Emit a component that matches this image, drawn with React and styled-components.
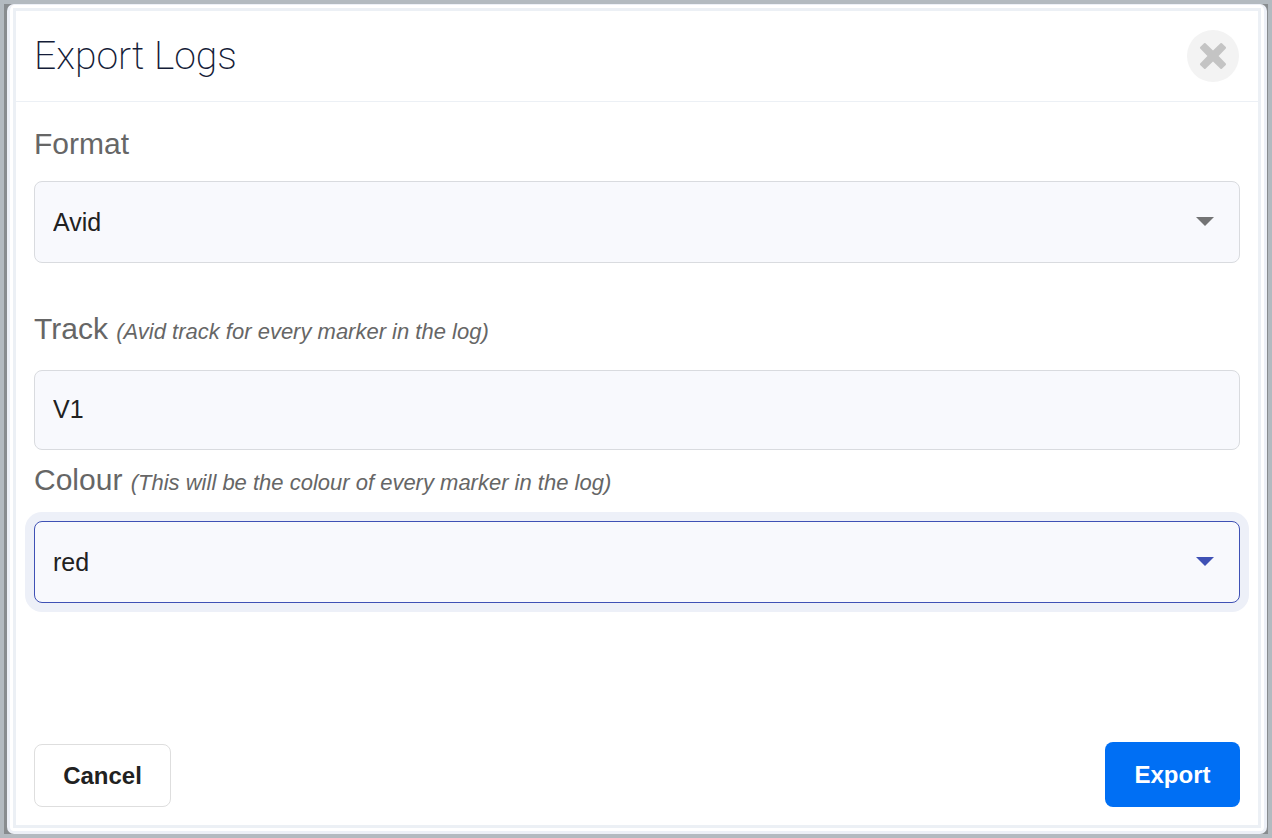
import { useState } from "react";
import styled, { createGlobalStyle } from "styled-components";

export default function App() {
  const [format, setFormat] = useState("Avid");
  const [track, setTrack] = useState("V1");
  const [colour, setColour] = useState("red");

  return (
    <>
      <GlobalStyle />
      <Page>
        <Shade>
          <Modal role="dialog" aria-labelledby="title">
            <Panel onSubmit={(e) => e.preventDefault()}>
              <Header>
                <Title id="title">Export Logs</Title>
                <CloseButton type="button" aria-label="Close">
                  <svg width="28" height="28" viewBox="0 0 28 28" aria-hidden="true">
                    <path
                      fill="#c4c4c4"
                      d="M5.1 1.2q.7-.6 1.4 0L14 8.4l7.5-7.2q.7-.6 1.4 0l3.9 3.9q.6.7 0 1.4L19.6 14l7.2 7.5q.6.7 0 1.4l-3.9 3.9q-.7.6-1.4 0L14 19.6l-7.5 7.2q-.7.6-1.4 0l-3.9-3.9q-.6-.7 0-1.4L8.4 14 1.2 6.5q-.6-.7 0-1.4z"
                    />
                  </svg>
                </CloseButton>
              </Header>
              <Fields>
                <Label htmlFor="format">Format</Label>
                <SelectBox>
                  <Select
                    id="format"
                    value={format}
                    onChange={(e) => setFormat(e.target.value)}
                  >
                    <option>Avid</option>
                    <option>CSV</option>
                  </Select>
                  <Arrow />
                </SelectBox>
                <Label htmlFor="track" $space="46px">
                  Track <Hint>(Avid track for every marker in the log)</Hint>
                </Label>
                <Input
                  id="track"
                  type="text"
                  value={track}
                  onChange={(e) => setTrack(e.target.value)}
                />
                <Label htmlFor="colour" $space="10px">
                  Colour{" "}
                  <Hint>(This will be the colour of every marker in the log)</Hint>
                </Label>
                <SelectBox $active>
                  <Select
                    id="colour"
                    value={colour}
                    onChange={(e) => setColour(e.target.value)}
                  >
                    <option>red</option>
                    <option>green</option>
                    <option>blue</option>
                  </Select>
                  <Arrow />
                </SelectBox>
              </Fields>
              <Footer>
                <CancelButton type="button">Cancel</CancelButton>
                <ExportButton type="submit">Export</ExportButton>
              </Footer>
            </Panel>
          </Modal>
        </Shade>
      </Page>
    </>
  );
}

function Arrow() {
  return (
    <ArrowIcon width="18" height="9" viewBox="0 0 18 9" aria-hidden="true">
      <path fill="currentColor" d="M0 0h18L9 9z" />
    </ArrowIcon>
  );
}

const GlobalStyle = createGlobalStyle`
  * {
    box-sizing: border-box;
  }

  body {
    margin: 0;
    font-family: "Liberation Sans", Arial, sans-serif;
    background-color: #b3bac0;
  }

  button, input, select {
    font-family: inherit;
  }
`;

const Page = styled.div`
  display: flex;
  min-height: 100vh;
  padding: 4px;
`;

const Shade = styled.div`
  display: flex;
  flex: 1;
  padding: 0 1px 0 3px;
  background-color: #888c8f;
`;

const Modal = styled.div`
  display: flex;
  flex: 1;
  padding: 3px;
  border: 3px solid #edf0f7;
  border-top-width: 1px;
  border-radius: 7px;
  background-color: #ffffff;
`;

const Panel = styled.form`
  display: flex;
  flex-direction: column;
  flex: 1;
  border: 3px solid #ecf0f5;
`;

const Header = styled.header`
  display: flex;
  align-items: center;
  justify-content: space-between;
  height: 91px;
  padding: 0 19px 0 18px;
  border-bottom: 1px solid #ecf0f5;
`;

const Title = styled.h1`
  margin: 0;
  font-family: Roboto, "Liberation Sans", sans-serif;
  font-size: 39px;
  font-weight: 200;
  line-height: 48px;
  color: #141c38;
`;

const CloseButton = styled.button`
  display: flex;
  align-items: center;
  justify-content: center;
  width: 52px;
  height: 52px;
  padding: 0;
  border: none;
  border-radius: 50%;
  background-color: #f3f3f3;
`;

const Fields = styled.div`
  display: flex;
  flex-direction: column;
  padding: 22px 18px;
`;

const Label = styled.label`
  margin-top: ${({ $space }) => $space || "0"};
  margin-bottom: ${({ $space }) => ($space ? "21px" : "17px")};
  font-size: 30px;
  line-height: 40px;
  color: #666666;
`;

const Hint = styled.em`
  font-size: 22px;
  line-height: 22px;
`;

const SelectBox = styled.div`
  position: relative;
  height: 82px;
  border: 1px solid ${({ $active }) => ($active ? "#3f51b5" : "#d9dbdf")};
  border-radius: 8px;
  background-color: #f8f9fd;
  box-shadow: ${({ $active }) => ($active ? "0 0 0 9px #edf0f8" : "none")};
  color: ${({ $active }) => ($active ? "#3f51b5" : "#737475")};
`;

const Select = styled.select`
  width: 100%;
  height: 100%;
  padding: 0 60px 0 18px;
  border: none;
  outline: none;
  appearance: none;
  background: transparent;
  font-size: 25px;
  color: #212121;
`;

const ArrowIcon = styled.svg`
  position: absolute;
  top: 35px;
  right: 25px;
  pointer-events: none;
`;

const Input = styled.input`
  width: 100%;
  height: 80px;
  padding: 0 18px 2px;
  border: 1px solid #d9dbdf;
  border-radius: 8px;
  outline: none;
  background-color: #f8f9fd;
  font-size: 25px;
  color: #212121;
`;

const Footer = styled.footer`
  display: flex;
  align-items: flex-end;
  justify-content: space-between;
  margin-top: auto;
  padding: 18px;
`;

const Button = styled.button`
  padding: 0;
  border-radius: 8px;
  font-size: 24px;
  font-weight: 700;
`;

const CancelButton = styled(Button)`
  width: 137px;
  height: 63px;
  border: 1px solid #dedede;
  background-color: #ffffff;
  color: #212121;
`;

const ExportButton = styled(Button)`
  width: 135px;
  height: 65px;
  border: none;
  background-color: #006ff4;
  color: #ffffff;
`;
